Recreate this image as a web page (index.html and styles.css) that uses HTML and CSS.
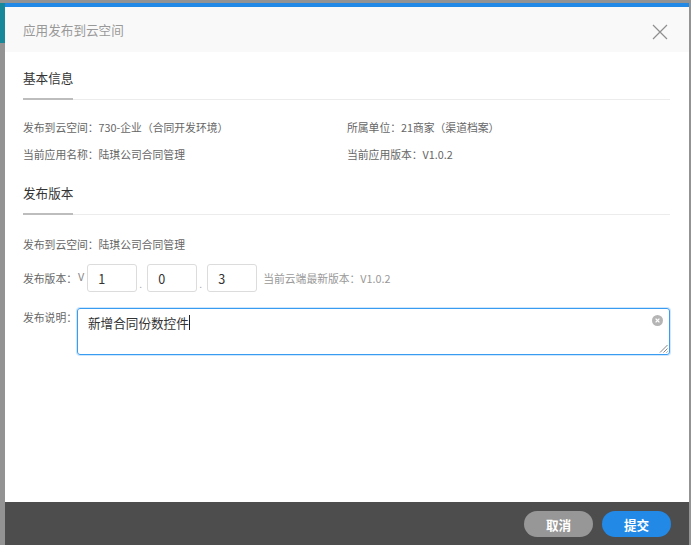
FILE: index.html
```html
<!DOCTYPE html>
<html lang="zh-CN">
<head>
<meta charset="utf-8">
<title>应用发布到云空间</title>
<link rel="stylesheet" href="styles.css">
</head>
<body>
<div class="backdrop">
  <div class="side-strip"></div>
  <div class="dialog">
    <div class="dialog-header">
      <span class="dialog-title">应用发布到云空间</span>
      <svg class="close-icon" width="16" height="16" viewBox="0 0 16 16">
        <path d="M1 1 L15 15 M15 1 L1 15" stroke="#8f8f8f" stroke-width="1.2" fill="none"/>
      </svg>
    </div>
    <div class="dialog-body">
      <div class="section-title"><span class="section-label">基本信息</span></div>
      <div class="info-grid">
        <div class="info-item">发布到云空间：730-企业（合同开发环境）</div>
        <div class="info-item">所属单位：21商家（渠道档案）</div>
        <div class="info-item">当前应用名称：陆琪公司合同管理</div>
        <div class="info-item">当前应用版本：V1.0.2</div>
      </div>
      <div class="section-title"><span class="section-label">发布版本</span></div>
      <div class="form-line">发布到云空间：陆琪公司合同管理</div>
      <div class="version-row">
        <span class="field-label">发布版本：</span><span class="v-prefix">V</span>
        <span class="num-box">1</span><span class="dot">.</span>
        <span class="num-box">0</span><span class="dot">.</span>
        <span class="num-box">3</span>
        <span class="latest">当前云端最新版本：V1.0.2</span>
      </div>
      <div class="desc-row">
        <span class="field-label desc-label">发布说明：</span>
        <div class="textarea">
          <span class="ta-text">新增合同份数控件</span><span class="caret"></span>
          <span class="clear-btn">
            <svg width="11" height="11" viewBox="0 0 11 11">
              <circle cx="5.5" cy="5.5" r="5.5" fill="#b5b5b5"/>
              <path d="M3.6 3.6 L7.4 7.4 M7.4 3.6 L3.6 7.4" stroke="#fff" stroke-width="1.3"/>
            </svg>
          </span>
          <svg class="grip" width="9" height="9" viewBox="0 0 9 9">
            <path d="M8.5 1 L1 8.5 M8.5 4.5 L4.5 8.5 M8.5 7.5 L7.5 8.5" stroke="#777" stroke-width="0.9"/>
          </svg>
        </div>
      </div>
    </div>
    <div class="dialog-footer">
      <button class="btn btn-cancel">取消</button>
      <button class="btn btn-submit">提交</button>
    </div>
  </div>
</div>
</body>
</html>
```
FILE: styles.css
```css
* { box-sizing: border-box; }
html, body {
  margin: 0;
  padding: 0;
  background: #8c8c8c;
}
body {
  font-family: "Noto Sans CJK SC", "Noto Sans", sans-serif;
  width: 691px;
  height: 545px;
  overflow: hidden;
}
.backdrop {
  display: flex;
  height: 545px;
  padding-top: 3px;
  padding-right: 2px;
  background: #939393;
}
.side-strip {
  width: 5px;
  height: 40px;
  background: #17879a;
  flex: none;
}
.dialog {
  flex: 1;
  display: flex;
  flex-direction: column;
  background: #fff;
  border-top: 4px solid #2389e6;
}
.dialog-header {
  height: 45px;
  flex: none;
  background: #f9f9f9;
  display: flex;
  align-items: center;
  justify-content: space-between;
  padding: 0 21px 0 18px;
}
.dialog-title {
  font-size: 12.6px;
  color: #999;
  margin-top: -1px;
}
.close-icon {
  display: block;
  margin-top: 4px;
}
.dialog-body {
  flex: 1;
  padding: 14px 19px 0 18px;
}
.section-title {
  border-bottom: 1px solid #ececec;
  height: 34px;
  display: flex;
  align-items: flex-end;
}
.section-label {
  display: block;
  font-size: 12.6px;
  color: #333;
  width: 50px;
  padding-bottom: 11px;
  border-bottom: 2px solid #bdbdbd;
  margin-bottom: -1px;
  white-space: nowrap;
}
.info-grid {
  display: grid;
  grid-template-columns: 324px 1fr;
  row-gap: 9px;
  padding-top: 18px;
  padding-bottom: 18px;
}
.info-item, .form-line {
  font-size: 10.8px;
  color: #666;
  line-height: 18px;
  white-space: nowrap;
}
.form-line {
  padding-top: 20px;
}
.version-row {
  display: flex;
  align-items: center;
  margin-top: 11px;
  font-size: 10.8px;
  color: #666;
}
.field-label { color: #666; font-size: 10.8px; white-space: nowrap; }
.v-prefix { color: #888; margin-left: 1px; margin-right: 3px; margin-top: -4px; }
.num-box {
  width: 50px;
  height: 28px;
  border: 1px solid #dcdcdc;
  border-radius: 3px;
  font-size: 12.6px;
  color: #333;
  padding-left: 10px;
  display: flex;
  align-items: center;
}
.dot {
  width: 10px;
  color: #aaa;
  font-size: 10px;
  padding-left: 2px;
  margin-top: 10px;
}
.latest {
  color: #999;
  font-size: 10.8px;
  margin-left: 6px;
  white-space: nowrap;
}
.desc-row {
  display: flex;
  margin-top: 16px;
}
.desc-label {
  width: 54px;
  flex: none;
  line-height: 18px;
}
.textarea {
  position: relative;
  flex: 1;
  height: 47px;
  border: 1px solid #3a9cf0;
  border-radius: 3px;
  box-shadow: 0 0 0 1px #cfe7fc;
  padding: 3px 10px;
  font-size: 12.6px;
  color: #333;
  line-height: 22px;
}
.caret {
  display: inline-block;
  width: 1px;
  height: 15px;
  background: #222;
  vertical-align: -2px;
}
.clear-btn {
  position: absolute;
  right: 6px;
  top: 6px;
  display: block;
  line-height: 0;
}
.grip {
  position: absolute;
  right: 1px;
  bottom: 1px;
}
.dialog-footer {
  height: 43px;
  flex: none;
  background: #4d4d4d;
  display: flex;
  align-items: center;
  justify-content: flex-end;
  gap: 9px;
  padding: 0 18px 0 0;
}
.btn {
  height: 26px;
  width: 69px;
  border: none;
  border-radius: 13px;
  color: #fff;
  font-family: "Noto Sans CJK SC", sans-serif;
  font-size: 12.6px;
  font-weight: bold;
  padding: 0;
  margin-top: 1px;
}
.btn-cancel { background: #979797; }
.btn-submit { background: #2389e6; }
```
